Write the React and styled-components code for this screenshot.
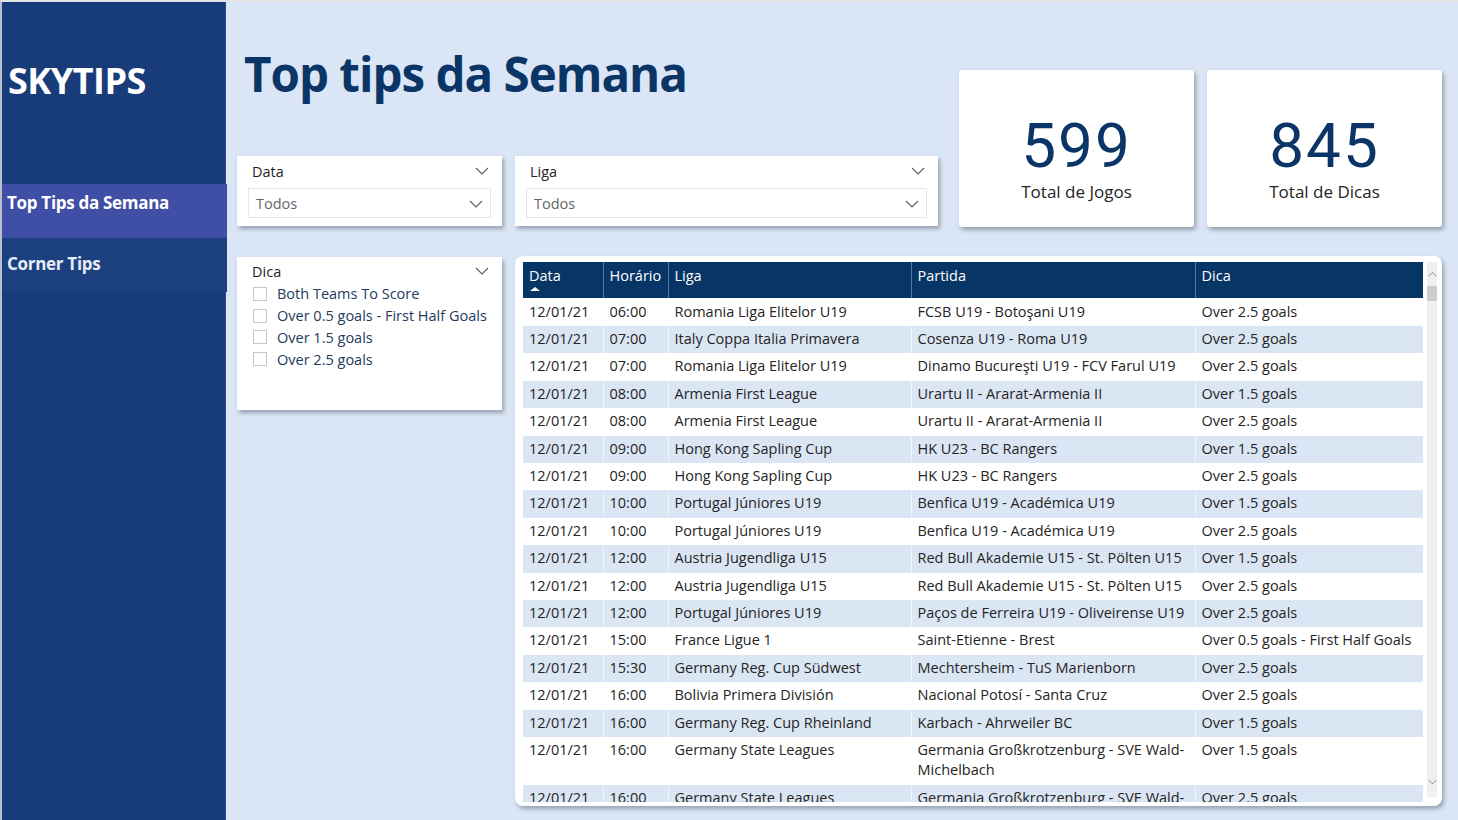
import React from 'react';
import styled, { createGlobalStyle } from 'styled-components';

const GlobalStyle = createGlobalStyle`
  html, body {
    margin: 0;
    padding: 0;
    background: #dae6f5;
    font-family: "Open Sans", "Noto Sans", sans-serif;
  }
  * { box-sizing: border-box; }
`;

const rows = [
  ['12/01/21', '06:00', 'Romania Liga Elitelor U19', 'FCSB U19 - Botoşani U19', 'Over 2.5 goals'],
  ['12/01/21', '07:00', 'Italy Coppa Italia Primavera', 'Cosenza U19 - Roma U19', 'Over 2.5 goals'],
  ['12/01/21', '07:00', 'Romania Liga Elitelor U19', 'Dinamo Bucureşti U19 - FCV Farul U19', 'Over 2.5 goals'],
  ['12/01/21', '08:00', 'Armenia First League', 'Urartu II - Ararat-Armenia II', 'Over 1.5 goals'],
  ['12/01/21', '08:00', 'Armenia First League', 'Urartu II - Ararat-Armenia II', 'Over 2.5 goals'],
  ['12/01/21', '09:00', 'Hong Kong Sapling Cup', 'HK U23 - BC Rangers', 'Over 1.5 goals'],
  ['12/01/21', '09:00', 'Hong Kong Sapling Cup', 'HK U23 - BC Rangers', 'Over 2.5 goals'],
  ['12/01/21', '10:00', 'Portugal Júniores U19', 'Benfica U19 - Académica U19', 'Over 1.5 goals'],
  ['12/01/21', '10:00', 'Portugal Júniores U19', 'Benfica U19 - Académica U19', 'Over 2.5 goals'],
  ['12/01/21', '12:00', 'Austria Jugendliga U15', 'Red Bull Akademie U15 - St. Pölten U15', 'Over 1.5 goals'],
  ['12/01/21', '12:00', 'Austria Jugendliga U15', 'Red Bull Akademie U15 - St. Pölten U15', 'Over 2.5 goals'],
  ['12/01/21', '12:00', 'Portugal Júniores U19', 'Paços de Ferreira U19 - Oliveirense U19', 'Over 2.5 goals'],
  ['12/01/21', '15:00', 'France Ligue 1', 'Saint-Etienne - Brest', 'Over 0.5 goals - First Half Goals'],
  ['12/01/21', '15:30', 'Germany Reg. Cup Südwest', 'Mechtersheim - TuS Marienborn', 'Over 2.5 goals'],
  ['12/01/21', '16:00', 'Bolivia Primera División', 'Nacional Potosí - Santa Cruz', 'Over 2.5 goals'],
  ['12/01/21', '16:00', 'Germany Reg. Cup Rheinland', 'Karbach - Ahrweiler BC', 'Over 1.5 goals'],
  ['12/01/21', '16:00', 'Germany State Leagues', 'Germania Großkrotzenburg - SVE Wald-Michelbach', 'Over 1.5 goals'],
  ['12/01/21', '16:00', 'Germany State Leagues', 'Germania Großkrotzenburg - SVE Wald-Michelbach', 'Over 2.5 goals'],
];

const columns = [
  { label: 'Data', width: 80, sorted: true },
  { label: 'Horário', width: 65 },
  { label: 'Liga', width: 243 },
  { label: 'Partida', width: 284 },
  { label: 'Dica', width: 228 },
];

const dicas = [
  'Both Teams To Score',
  'Over 0.5 goals - First Half Goals',
  'Over 1.5 goals',
  'Over 2.5 goals',
];

const Chevron = ({ up }) => (
  <svg width="14" height="8" viewBox="0 0 14 8" fill="none">
    <path
      d={up ? 'M1 7.5L7 1.5L13 7.5' : 'M1 1L7 7L13 1'}
      stroke="#605e5c"
      strokeWidth="1.1"
    />
  </svg>
);

const App = () => {
  return (
    <>
      <GlobalStyle />
      <Page>
        <Sidebar>
          <Logo>SKYTIPS</Logo>
          <NavItem active>Top Tips da Semana</NavItem>
          <NavItem>Corner Tips</NavItem>
        </Sidebar>

        <Main>
          <Title>Top tips da Semana</Title>

          <KpiCard col={3}>
            <KpiValue>599</KpiValue>
            <KpiLabel>Total de Jogos</KpiLabel>
          </KpiCard>
          <KpiCard col={4}>
            <KpiValue>845</KpiValue>
            <KpiLabel>Total de Dicas</KpiLabel>
          </KpiCard>

          <Slicer col={1}>
            <SlicerHead>
              <span>Data</span>
              <Chevron />
            </SlicerHead>
            <Dropdown>
              <span>Todos</span>
              <Chevron />
            </Dropdown>
          </Slicer>
          <Slicer col={2}>
            <SlicerHead>
              <span>Liga</span>
              <Chevron />
            </SlicerHead>
            <Dropdown>
              <span>Todos</span>
              <Chevron />
            </Dropdown>
          </Slicer>

          <DicaSlicer>
            <SlicerHead>
              <span>Dica</span>
              <Chevron />
            </SlicerHead>
            <CheckList>
              {dicas.map((d) => (
                <CheckItem key={d}>
                  <Box />
                  {d}
                </CheckItem>
              ))}
            </CheckList>
          </DicaSlicer>

          <TableCard>
            <TableArea>
              <Table>
                <colgroup>
                  {columns.map((c) => (
                    <col key={c.label} style={{ width: c.width }} />
                  ))}
                </colgroup>
                <thead>
                  <tr>
                    {columns.map((c) => (
                      <Th key={c.label}>
                        {c.label}
                        {c.sorted && <SortArrow />}
                      </Th>
                    ))}
                  </tr>
                </thead>
                <tbody>
                  {rows.map((r, i) => (
                    <Tr key={i} $striped={i % 2 === 1}>
                      {r.map((cell, j) => (
                        <Td key={j}>{cell}</Td>
                      ))}
                    </Tr>
                  ))}
                </tbody>
              </Table>
            </TableArea>
            <ScrollBar>
              <Chevron up />
              <Thumb />
              <ScrollSpacer />
              <Chevron />
            </ScrollBar>
          </TableCard>
        </Main>
      </Page>
    </>
  );
};

const Page = styled.div`
  display: flex;
  height: 820px;
  overflow: hidden;
  border-top: 2px solid #e4e4e4;
  border-left: 2px solid #b9c0cc;
`;

const Sidebar = styled.nav`
  width: 224px;
  flex-shrink: 0;
  background: #183c79;
  border-right: 1px solid #2b4c88;
  display: flex;
  flex-direction: column;
`;

const Logo = styled.div`
  padding: 54px 0 0 6px;
  height: 182px;
  color: #ffffff;
  font-family: "Open Sans", sans-serif;
  font-weight: 700;
  font-size: 36px;
  letter-spacing: -0.5px;
`;

const NavItem = styled.div`
  height: 54px;
  padding: ${(p) => (p.active ? '7px' : '14px')} 0 0 5px;
  margin-right: -2px;
  background: ${(p) => (p.active ? '#3f4fa5' : '#1c3f80')};
  color: ${(p) => (p.active ? '#ffffff' : '#e6ecf6')};
  font-weight: 700;
  font-size: 17px;
  letter-spacing: -0.3px;
`;

const Main = styled.main`
  flex: 1;
  display: grid;
  grid-template-columns: 265px 423px 243px 235px;
  grid-template-rows: 124px 70px 550px;
  column-gap: 13px;
  row-gap: 30px;
  padding-left: 11px;
  align-content: start;
`;

const Title = styled.h1`
  grid-column: 1 / 3;
  grid-row: 1;
  margin: 0;
  padding: 39px 0 0 7px;
  font-family: "Open Sans", sans-serif;
  font-weight: 700;
  font-size: 47.5px;
  letter-spacing: -1px;
  color: #0b3566;
`;

const KpiCard = styled.div`
  grid-column: ${(p) => p.col};
  grid-row: 1 / 3;
  align-self: end;
  justify-self: end;
  width: 235px;
  height: 157px;
  background: #ffffff;
  border-radius: 3px;
  box-shadow: 2px 3px 4px rgba(70, 80, 100, 0.45);
  display: flex;
  flex-direction: column;
  align-items: center;
  padding-top: 43px;
  margin-bottom: -1px;
`;

const KpiValue = styled.div`
  font-family: Roboto, sans-serif;
  font-size: 62px;
  line-height: 66px;
  letter-spacing: 2px;
  color: #0b3566;
`;

const KpiLabel = styled.div`
  font-size: 17px;
  color: #252423;
  margin-top: 1px;
`;

const Slicer = styled.div`
  grid-column: ${(p) => p.col};
  grid-row: 2;
  background: #ffffff;
  box-shadow: 2px 3px 4px rgba(70, 80, 100, 0.45);
  padding: 5px 11px 0 11px;
`;

const SlicerHead = styled.div`
  display: flex;
  align-items: center;
  justify-content: space-between;
  padding: 0 2px 0 4px;
  height: 20px;
  font-size: 14.5px;
  color: #252423;
`;

const Dropdown = styled.div`
  margin-top: 7px;
  height: 30px;
  border: 1px solid #e6e6e6;
  display: flex;
  align-items: center;
  justify-content: space-between;
  padding: 1px 7px 0;
  font-size: 14.5px;
  color: #666666;
`;

const DicaSlicer = styled.div`
  grid-column: 1;
  grid-row: 3;
  align-self: start;
  height: 153px;
  margin-top: 1px;
  background: #ffffff;
  box-shadow: 2px 3px 4px rgba(70, 80, 100, 0.45);
  padding: 4px 11px 0 11px;
`;

const CheckList = styled.div`
  display: flex;
  flex-direction: column;
  padding: 2px 0 0 5px;
`;

const CheckItem = styled.div`
  display: flex;
  align-items: center;
  height: 21.8px;
  font-size: 14.5px;
  color: #243a5e;
`;

const Box = styled.span`
  width: 14px;
  height: 14px;
  border: 1px solid #c8c8c8;
  margin-right: 10px;
`;

const TableCard = styled.div`
  grid-column: 2 / 5;
  grid-row: 3;
  height: 550px;
  min-height: 0;
  overflow: hidden;
  background: #ffffff;
  border-radius: 8px;
  box-shadow: 2px 3px 4px rgba(70, 80, 100, 0.45);
  padding: 6px 4px 4px 8px;
  display: flex;
  gap: 4px;
`;

const TableArea = styled.div`
  width: 900px;
  height: 540px;
  overflow: hidden;
`;

const Table = styled.table`
  width: 900px;
  table-layout: fixed;
  border-collapse: collapse;
  font-size: 14.5px;
`;

const Th = styled.th`
  position: relative;
  height: 36px;
  padding: 4px 6px 0;
  vertical-align: top;
  text-align: left;
  font-weight: 400;
  color: #ffffff;
  background: #073566;
  border-left: 1px solid #5c7ba3;
  border-bottom: 1px solid #ffffff;
  white-space: nowrap;
  &:first-child { border-left: none; }
`;

const SortArrow = styled.span`
  position: absolute;
  left: 7px;
  top: 25px;
  width: 0;
  height: 0;
  border-left: 5px solid transparent;
  border-right: 5px solid transparent;
  border-bottom: 4px solid #ffffff;
`;

const Tr = styled.tr`
  background: ${(p) => (p.$striped ? '#dbe6f5' : '#ffffff')};
`;

const Td = styled.td`
  padding: 3px 6px 4px;
  line-height: 20.4px;
  vertical-align: top;
  color: #252423;
  border-left: 1px solid rgba(255, 255, 255, 0.6);
  &:first-child { border-left: none; }
`;

const ScrollBar = styled.div`
  width: 10px;
  height: 535px;
  background: #f0f0f0;
  display: flex;
  flex-direction: column;
  align-items: center;
  padding: 9px 0 12px;
  svg { width: 9px; height: 6px; }
`;

const Thumb = styled.div`
  width: 10px;
  height: 15px;
  margin-top: 9px;
  background: #cdcdcd;
`;

const ScrollSpacer = styled.div`
  flex: 1;
`;

export default App;
